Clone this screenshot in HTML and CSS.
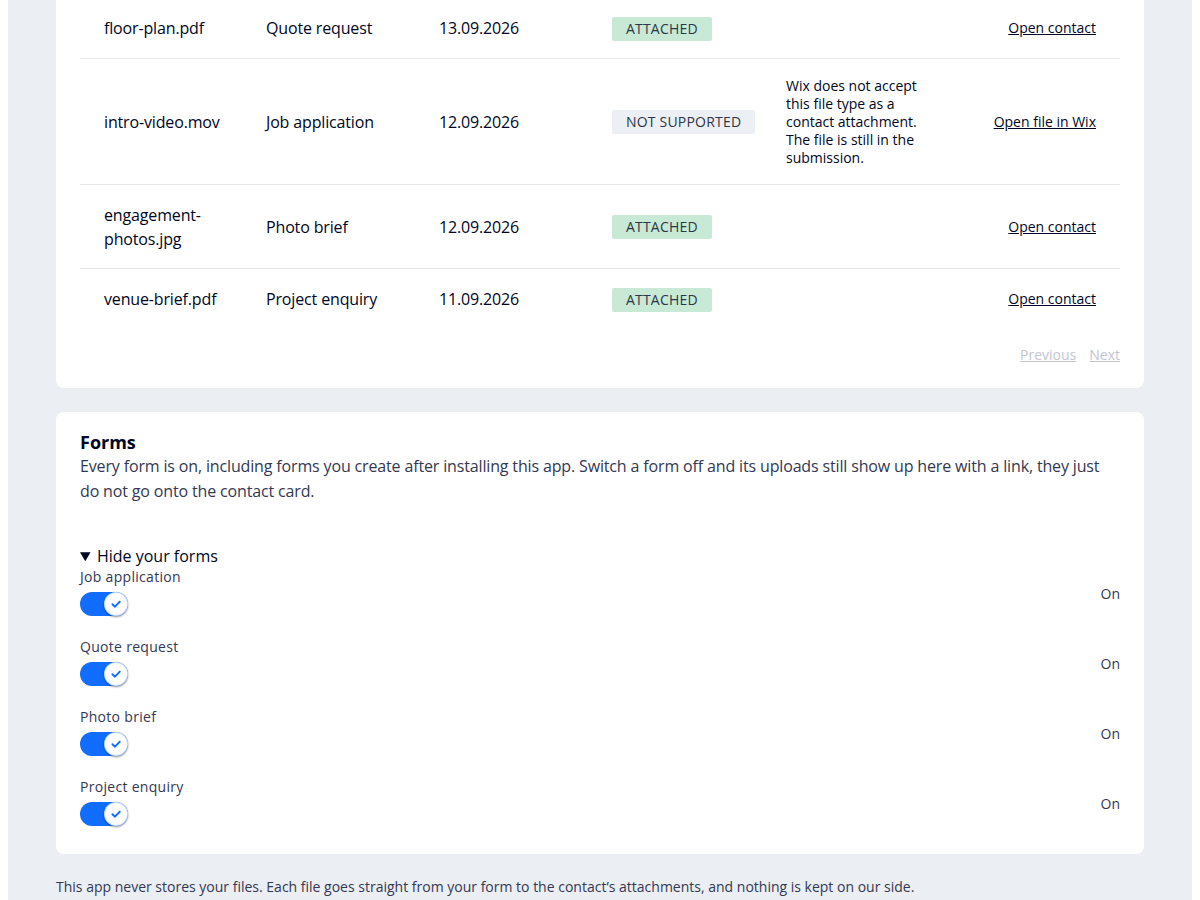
FILE: index.html
```html
<!DOCTYPE html>
<html lang="en">
<head>
<meta charset="utf-8">
<title>Uploads</title>
<link rel="stylesheet" href="styles.css">
</head>
<body>
<div class="page">
  <section class="card files">
    <div class="rows">
      <div class="row">
        <div class="cell name">floor-plan.pdf</div>
        <div class="cell">Quote request</div>
        <div class="cell">13.09.2026</div>
        <div class="cell"><span class="badge ok">ATTACHED</span></div>
        <div class="cell note"></div>
        <div class="cell action"><a href="#">Open contact</a></div>
      </div>
      <div class="row">
        <div class="cell name">intro-video.mov</div>
        <div class="cell">Job application</div>
        <div class="cell">12.09.2026</div>
        <div class="cell"><span class="badge na">NOT SUPPORTED</span></div>
        <div class="cell note">Wix does not accept this file type as a contact attachment. The file is still in the submission.</div>
        <div class="cell action"><a href="#">Open file in Wix</a></div>
      </div>
      <div class="row">
        <div class="cell name">engagement-photos.jpg</div>
        <div class="cell">Photo brief</div>
        <div class="cell">12.09.2026</div>
        <div class="cell"><span class="badge ok">ATTACHED</span></div>
        <div class="cell note"></div>
        <div class="cell action"><a href="#">Open contact</a></div>
      </div>
      <div class="row">
        <div class="cell name">venue-brief.pdf</div>
        <div class="cell">Project enquiry</div>
        <div class="cell">11.09.2026</div>
        <div class="cell"><span class="badge ok">ATTACHED</span></div>
        <div class="cell note"></div>
        <div class="cell action"><a href="#">Open contact</a></div>
      </div>
    </div>
    <nav class="pager">
      <a href="#" class="disabled">Previous</a>
      <a href="#" class="disabled">Next</a>
    </nav>
  </section>

  <section class="card forms">
    <h2 class="title">Forms</h2>
    <p class="desc">Every form is on, including forms you create after installing this app. Switch a form off and its uploads still show up here with a link, they just do not go onto the contact card.</p>
    <details open class="list">
      <summary>Hide your forms</summary>
      <div class="items">
        <div class="item">
          <div class="left">
            <div class="label">Job application</div>
            <span class="toggle"><span class="knob"><svg viewBox="0 0 12 12" width="12" height="12"><path d="M2.4 6.2 L5 8.7 L9.8 3.6" fill="none" stroke="#116dff" stroke-width="1.9" stroke-linecap="round" stroke-linejoin="round"/></svg></span></span>
          </div>
          <div class="state">On</div>
        </div>
        <div class="item">
          <div class="left">
            <div class="label">Quote request</div>
            <span class="toggle"><span class="knob"><svg viewBox="0 0 12 12" width="12" height="12"><path d="M2.4 6.2 L5 8.7 L9.8 3.6" fill="none" stroke="#116dff" stroke-width="1.9" stroke-linecap="round" stroke-linejoin="round"/></svg></span></span>
          </div>
          <div class="state">On</div>
        </div>
        <div class="item">
          <div class="left">
            <div class="label">Photo brief</div>
            <span class="toggle"><span class="knob"><svg viewBox="0 0 12 12" width="12" height="12"><path d="M2.4 6.2 L5 8.7 L9.8 3.6" fill="none" stroke="#116dff" stroke-width="1.9" stroke-linecap="round" stroke-linejoin="round"/></svg></span></span>
          </div>
          <div class="state">On</div>
        </div>
        <div class="item">
          <div class="left">
            <div class="label">Project enquiry</div>
            <span class="toggle"><span class="knob"><svg viewBox="0 0 12 12" width="12" height="12"><path d="M2.4 6.2 L5 8.7 L9.8 3.6" fill="none" stroke="#116dff" stroke-width="1.9" stroke-linecap="round" stroke-linejoin="round"/></svg></span></span>
          </div>
          <div class="state">On</div>
        </div>
      </div>
    </details>
  </section>

  <p class="footer">This app never stores your files. Each file goes straight from your form to the contact’s attachments, and nothing is kept on our side.</p>
</div>
</body>
</html>
```

FILE: styles.css
```css
html, body {
  background: #ffffff;
}
body {
  margin: 0 8px;
  font-family: "Open Sans", "Noto Sans", sans-serif;
  color: #000624;
}
.page {
  background: #ebeef3;
  padding: 0 48px 24px;
  margin-top: -26px;
}
.card {
  background: #ffffff;
  border-radius: 8px;
}
.files {
  padding: 24px 24px 23px;
}
.rows {
  display: flex;
  flex-direction: column;
}
.row {
  display: grid;
  grid-template-columns: 162px 173px 173px 174px 198px 1fr;
  align-items: center;
  border-bottom: 1px solid #e4e6ea;
}
.row:last-child {
  border-bottom: none;
}
.cell {
  padding: 17.5px 24px;
  font-size: 16px;
  line-height: 24px;
  letter-spacing: -0.15px;
}
.cell.name {
  padding-right: 12px;
}
.note {
  font-size: 14px;
  line-height: 18px;
  letter-spacing: 0;
}
.action {
  text-align: right;
  font-size: 14px;
  letter-spacing: 0;
  white-space: nowrap;
}
.action a {
  color: #000624;
  text-decoration: underline;
}
.badge {
  display: inline-block;
  white-space: nowrap;
  font-size: 14px;
  line-height: 24px;
  letter-spacing: 0.2px;
  padding: 0 14px;
  border-radius: 2px;
  color: #2d3648;
}
.badge.ok {
  background: #c7e9d5;
}
.badge.na {
  background: #eceff3;
}
.pager {
  display: flex;
  justify-content: flex-end;
  gap: 13px;
  margin-top: 16px;
  font-size: 14px;
  line-height: 20px;
}
.pager a.disabled {
  color: #c3c6d0;
  text-decoration: underline;
}
.forms {
  margin-top: 24px;
  padding: 19px 24px 28px;
}
.title {
  margin: 0;
  font-size: 18px;
  line-height: 22px;
  font-weight: 700;
  color: #000624;
}
.desc {
  margin: 1px 0 0;
  font-size: 16px;
  line-height: 25px;
  letter-spacing: -0.15px;
  color: #333853;
}
.list {
  margin-top: 40px;
}
.list summary {
  font-size: 16px;
  line-height: 24px;
  cursor: pointer;
  color: #000624;
}
.items {
  display: flex;
  flex-direction: column;
  gap: 22px;
}
.item {
  display: flex;
  align-items: center;
  justify-content: space-between;
}
.left {
  display: flex;
  flex-direction: column;
  align-items: flex-start;
  gap: 6px;
}
.label {
  font-size: 14px;
  line-height: 18px;
  letter-spacing: 0.3px;
  color: #333853;
}
.state {
  font-size: 14px;
  line-height: 18px;
  color: #333853;
  padding-top: 3px;
}
.toggle {
  display: flex;
  align-items: center;
  justify-content: flex-end;
  width: 48px;
  height: 24px;
  border-radius: 12px;
  background: #116dff;
}
.knob {
  display: flex;
  align-items: center;
  justify-content: center;
  width: 24px;
  height: 24px;
  border-radius: 50%;
  background: #ffffff;
  box-shadow: 0 1px 2px rgba(0, 6, 36, 0.45), inset 0 0 0 1px rgba(17, 109, 255, 0.25);
}
.footer {
  margin: 0;
  padding: 24px 0 4px;
  font-size: 14px;
  line-height: 18px;
  color: #333853;
}
```
